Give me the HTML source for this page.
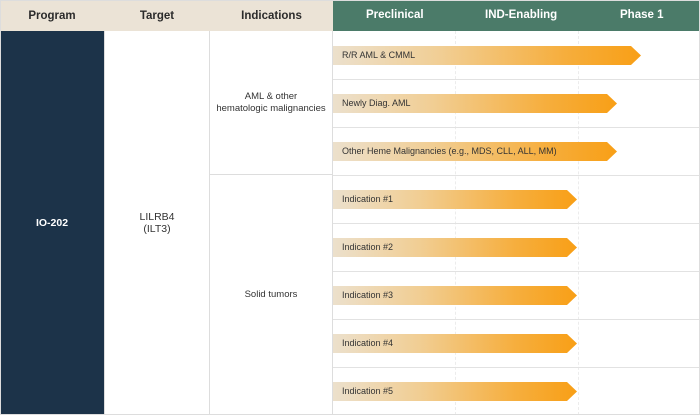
<!DOCTYPE html>
<html><head><style>
*{margin:0;padding:0;box-sizing:border-box}
body{width:700px;height:415px;background:#fff;font-family:"Liberation Sans",sans-serif;position:relative;overflow:hidden}
.a{position:absolute}
.hb{background:#ebe3d6;color:#2b2b2b;font-weight:bold;font-size:11.5px;display:flex;align-items:center;justify-content:center;top:0;height:31px}
.hg{background:#4b7b69;top:0;height:31px;left:333px;width:367px}
.hg span{position:absolute;top:9px;color:#fff;font-weight:bold;font-size:11.5px}
.hl{left:333px;width:367px;height:1px;background:#e2e2e2}
.vl{width:0;border-left:1px dashed #ececec;top:31px;height:384px}
.bar{height:19px;left:333px;background:linear-gradient(90deg,#ece0cc 0%,#f1ce94 35%,#f6ae3d 75%,#f89f16 100%);clip-path:polygon(0 0,calc(100% - 10px) 0,100% 50%,calc(100% - 10px) 100%,0 100%);font-size:9px;color:#333;padding-left:9px;line-height:19px;white-space:nowrap}
.c{display:flex;align-items:center;justify-content:center;text-align:center;font-size:9.5px;color:#333;line-height:12px}
</style></head><body>
<div class="a hb" style="left:0;width:104px">Program</div>
<div class="a hb" style="left:104px;width:106px">Target</div>
<div class="a hb" style="left:210px;width:123px">Indications</div>
<div class="a hg"><span style="left:33px">Preclinical</span><span style="left:152px">IND-Enabling</span><span style="left:287px">Phase 1</span></div>
<div class="a c" style="left:0;top:31px;width:104px;height:384px;background:#1c3349;color:#fff;font-weight:bold;font-size:10.5px">IO-202</div>
<div class="a c" style="left:104px;top:31px;width:106px;height:384px;border-left:1px solid #ddd;border-right:1px solid #ddd;font-size:10.5px">LILRB4<br>(ILT3)</div>
<div class="a c" style="left:210px;top:31px;width:123px;height:144px;border-right:1px solid #ddd;border-bottom:1px solid #ddd">AML &amp; other<br>hematologic malignancies</div>
<div class="a c" style="left:210px;top:175px;width:123px;height:240px;border-right:1px solid #ddd">Solid tumors</div>
<div class="a vl" style="left:455px"></div>
<div class="a vl" style="left:578px"></div>
<div class="a hl" style="top:79px"></div>
<div class="a hl" style="top:127px"></div>
<div class="a hl" style="top:175px"></div>
<div class="a hl" style="top:223px"></div>
<div class="a hl" style="top:271px"></div>
<div class="a hl" style="top:319px"></div>
<div class="a hl" style="top:367px"></div>
<div class="a bar" style="top:46px;width:308px">R/R AML &amp; CMML</div>
<div class="a bar" style="top:94px;width:284px">Newly Diag. AML</div>
<div class="a bar" style="top:142px;width:284px">Other Heme Malignancies (e.g., MDS, CLL, ALL, MM)</div>
<div class="a bar" style="top:190px;width:244px">Indication #1</div>
<div class="a bar" style="top:238px;width:244px">Indication #2</div>
<div class="a bar" style="top:286px;width:244px">Indication #3</div>
<div class="a bar" style="top:334px;width:244px">Indication #4</div>
<div class="a bar" style="top:382px;width:244px">Indication #5</div>
<div class="a" style="left:0;top:0;width:700px;height:415px;border:1px solid #ddd"></div>
</body></html>
